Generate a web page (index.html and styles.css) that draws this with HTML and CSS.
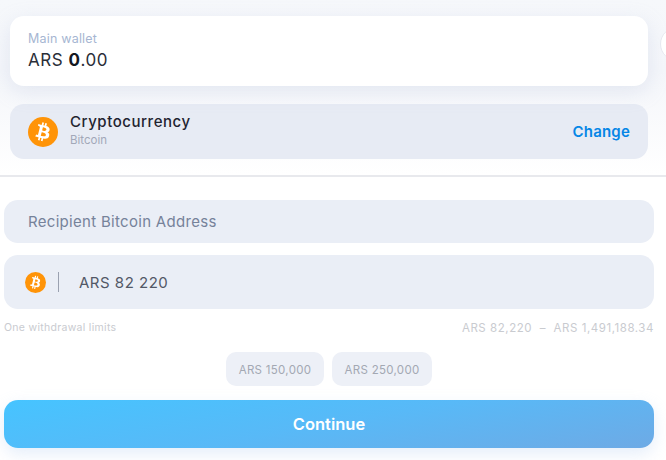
FILE: index.html
```html
<!DOCTYPE html>
<html lang="en">
<head>
    <meta charset="UTF-8">
    <meta name="viewport" content="width=device-width, initial-scale=1.0">
    <title>Withdraw</title>
    <link rel="stylesheet" href="styles.css">
</head>
<body>
    <svg class="defs" width="0" height="0">
        <symbol id="btc" viewBox="0 0 64 64">
            <circle cx="32" cy="32" r="32" fill="#ff9408"/>
            <path fill="#fff" d="M46.103 27.444c.637-4.258-2.605-6.547-7.038-8.074l1.438-5.768-3.511-.875-1.4 5.616c-.923-.23-1.871-.447-2.813-.662l1.41-5.653-3.509-.875-1.439 5.766c-.764-.174-1.514-.346-2.242-.527l.004-.018-4.842-1.209-.934 3.75s2.605.597 2.55.634c1.422.355 1.679 1.296 1.636 2.042l-1.638 6.571c.098.025.225.061.365.117l-.371-.092-2.296 9.205c-.174.432-.615 1.08-1.609.834.035.051-2.552-.637-2.552-.637l-1.743 4.019 4.569 1.139c.85.213 1.683.436 2.503.646l-1.453 5.834 3.507.875 1.439-5.772c.958.26 1.888.5 2.798.726l-1.434 5.745 3.511.875 1.453-5.823c5.987 1.133 10.489.676 12.384-4.739 1.527-4.36-.076-6.875-3.226-8.515 2.294-.529 4.022-2.038 4.483-5.155zM38.08 38.693c-1.085 4.36-8.426 2.003-10.806 1.412l1.928-7.729c2.38.594 10.012 1.77 8.878 6.317zm1.086-11.312c-.99 3.966-7.1 1.951-9.082 1.457l1.748-7.01c1.982.494 8.365 1.416 7.334 5.553z"/>
        </symbol>
    </svg>

    <div class="top">
        <div class="wallet-row">
            <div class="wallet">
                <div class="wallet-label">Main wallet</div>
                <div class="wallet-sum">ARS <b>0</b>.00</div>
            </div>
            <div class="round-btn"></div>
        </div>
        <div class="method">
            <svg class="coin"><use href="#btc"/></svg>
            <div class="method-text">
                <div class="method-title">Cryptocurrency</div>
                <div class="method-sub">Bitcoin</div>
            </div>
            <a class="change">Change</a>
        </div>
    </div>

    <div class="form">
        <div class="field address">Recipient Bitcoin Address</div>
        <div class="field amount">
            <svg class="coin-small"><use href="#btc"/></svg>
            <span class="sep"></span>
            <span class="amount-val">ARS 82 220</span>
        </div>
        <div class="limits">
            <span>One withdrawal limits</span>
            <span class="limits-range">ARS 82,220 &nbsp;–&nbsp; ARS 1,491,188.34</span>
        </div>
        <div class="chips">
            <div class="chip chip-a">ARS 150,000</div>
            <div class="chip chip-b">ARS 250,000</div>
        </div>
        <button class="continue">Continue</button>
    </div>
</body>
</html>
```

FILE: styles.css
```css
html, body {
    height: 100%;
}
body {
    font-family: Inter, "Liberation Sans", sans-serif;
    margin: 0;
    width: 666px;
    height: 460px;
    overflow: hidden;
    background: #fff;
    color: #1f2430;
}
.defs {
    position: absolute;
}
.top {
    padding: 16px 0 16px 10px;
    height: 143px;
    background: linear-gradient(180deg, #f6f8fb 0, #f4f6fa 40%, #fff 100%);
    border-bottom: 2px solid #e8e9ed;
}
.wallet-row {
    display: flex;
    align-items: center;
    gap: 12px;
    height: 70px;
}
.wallet {
    width: 638px;
    flex: none;
    height: 70px;
    box-sizing: border-box;
    padding: 15px 18px;
    background: #fff;
    border-radius: 14px;
    box-shadow: 0 6px 20px rgba(170, 185, 215, 0.25);
}
.wallet-label {
    font-size: 12.5px;
    line-height: 16px;
    letter-spacing: 0.2px;
    color: #a6b6d2;
}
.wallet-sum {
    font-size: 17px;
    line-height: 24px;
    margin-top: 1px;
    letter-spacing: 0.55px;
    color: #2a2e38;
}
.wallet-sum b {
    color: #14171f;
}
.round-btn {
    width: 34px;
    height: 34px;
    flex: none;
    margin-top: -14px;
    border-radius: 50%;
    background: #fff;
    border: 1px solid #e6e9f0;
    box-sizing: border-box;
}
.method {
    width: 638px;
    height: 55px;
    margin-top: 18px;
    box-sizing: border-box;
    padding: 0 18px;
    display: flex;
    align-items: center;
    background: #e7ebf4;
    border-radius: 14px;
}
.coin {
    width: 30px;
    height: 30px;
    flex: none;
    margin-right: 12px;
}
.method-text {
    flex: 1;
}
.method-title {
    font-size: 15px;
    font-weight: 500;
    line-height: 18px;
    letter-spacing: 0.55px;
    margin-top: -1px;
    color: #1f2430;
}
.method-sub {
    font-size: 11.5px;
    line-height: 18px;
    color: #a2a8b8;
}
.change {
    font-size: 15px;
    font-weight: 600;
    letter-spacing: 0.2px;
    color: #0586e6;
}
.form {
    padding: 23px 12px 0 4px;
}
.field {
    background: #eaeef6;
    border-radius: 14px;
    display: flex;
    align-items: center;
}
.address {
    height: 43px;
    padding-left: 24px;
    font-size: 15px;
    letter-spacing: 0.3px;
    color: #76829a;
}
.amount {
    height: 54px;
    margin-top: 12px;
    padding-left: 21px;
}
.coin-small {
    width: 21px;
    height: 21px;
    flex: none;
}
.sep {
    width: 1px;
    height: 20px;
    margin: 0 20px 0 12px;
    background: #9aa1b0;
}
.amount-val {
    font-size: 15px;
    letter-spacing: 0.5px;
    color: #525866;
}
.limits {
    display: flex;
    justify-content: space-between;
    margin-top: 12px;
    font-size: 10.5px;
    line-height: 13px;
    letter-spacing: 0.3px;
    color: #c9cbd0;
}
.limits-range {
    font-size: 11.5px;
    margin-top: 1px;
    letter-spacing: 0.55px;
}
.chips {
    display: flex;
    justify-content: center;
    gap: 8px;
    margin-top: 17px;
}
.chip {
    height: 34px;
    padding-top: 1px;
    box-sizing: border-box;
    display: flex;
    align-items: center;
    justify-content: center;
    background: #edf0f7;
    border-radius: 10px;
    font-size: 11.5px;
    letter-spacing: 0.3px;
    color: #a3a8b3;
}
.chip-a {
    width: 98px;
}
.chip-b {
    width: 100px;
}
.continue {
    display: block;
    width: 100%;
    height: 48px;
    margin-top: 14px;
    border: none;
    border-radius: 14px;
    font-family: inherit;
    font-size: 16.5px;
    font-weight: 600;
    color: #fff;
    background: linear-gradient(170deg, #46c4ff 0, #58b9f7 50%, #6eaae5 100%);
    box-shadow: 0 6px 16px rgba(170, 200, 240, 0.3);
}
```
